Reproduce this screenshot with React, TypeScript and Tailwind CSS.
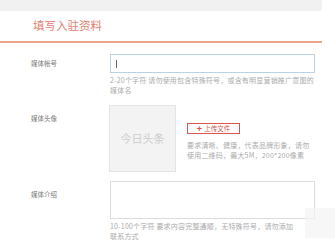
export default function App() {
  const font = { fontFamily: '"Noto Sans CJK SC", "Noto Sans", sans-serif' };
  return (
    <div
      style={font}
      className="relative h-[246px] w-[335px] overflow-hidden bg-white"
    >
      {/* top band */}
      <div className="h-[11px] w-[322px] rounded-br-[3px] bg-[#f1f1f1]" />

      {/* header */}
      <div className="flex h-[30px] w-[322px] items-center pl-[33px] text-[11.5px] text-[#e4806f]">
        填写入驻资料
      </div>
      <div className="h-[2px] w-[322px] bg-[#eba38f]" />

      {/* 媒体帐号 */}
      <div className="mt-[11px] flex">
        <div className="w-[110px] pl-[31px] pt-[5px] text-[6.5px] leading-[8px] text-[#777]">
          媒体帐号
        </div>
        <div className="w-[205px]">
          <div className="flex h-[19px] items-center border border-[#b9d3e6] px-[5px]">
            <div className="h-[8px] w-px bg-[#666]" />
          </div>
          <p className="mt-[2px] whitespace-nowrap text-[7px] leading-[10px] tracking-[0.2px] text-[#aaa]">
            2-20个字符 请勿使用包含特殊符号，或含有明显营销推广意图的
            <br />
            媒体名
          </p>
        </div>
      </div>

      {/* 媒体头像 */}
      <div className="mt-[10px] flex">
        <div className="w-[109px] pl-[31px] pt-[9px] text-[6.5px] leading-[8px] text-[#777]">
          媒体头像
        </div>
        <div className="flex h-[67px] w-[67px] items-center justify-center border border-[#e3e3e3] bg-[#f3f3f3] text-[11px] text-[#cdcdcd]">
          今日头条
        </div>
        <div className="ml-[11px] w-[128px] pt-[18px]">
          <div className="flex h-[11px] w-[53px] items-center justify-center gap-[2px] border border-[#d9534f] text-[6.5px] leading-none text-[#d9534f]">
            <span className="text-[9px] font-bold leading-none">+</span>
            <span>上传文件</span>
          </div>
          <p className="mt-[6px] whitespace-nowrap text-[7px] leading-[10px] tracking-[0.2px] text-[#aaa]">
            要求清晰、健康，代表品牌形象，请勿
            <br />
            使用二维码，最大5M，200*200像素
          </p>
        </div>
      </div>

      {/* 媒体介绍 */}
      <div className="mt-[9px] flex">
        <div className="w-[110px] pl-[31px] pt-[9px] text-[6.5px] leading-[8px] text-[#777]">
          媒体介绍
        </div>
        <div className="w-[205px]">
          <div className="h-[38px] border border-[#dcdcdc]" />
          <p className="mt-[2px] whitespace-nowrap text-[7px] leading-[10px] tracking-[0.2px] text-[#aaa]">
            10-100个字符 要求内容完整通顺，无特殊符号，请勿添加
            <br />
            联系方式
          </p>
        </div>
      </div>

      {/* faded watermark block */}
      <div className="absolute right-0 top-[208px] h-[30px] w-[30px] bg-[#f4f4f4]/70" />
    </div>
  );
}
